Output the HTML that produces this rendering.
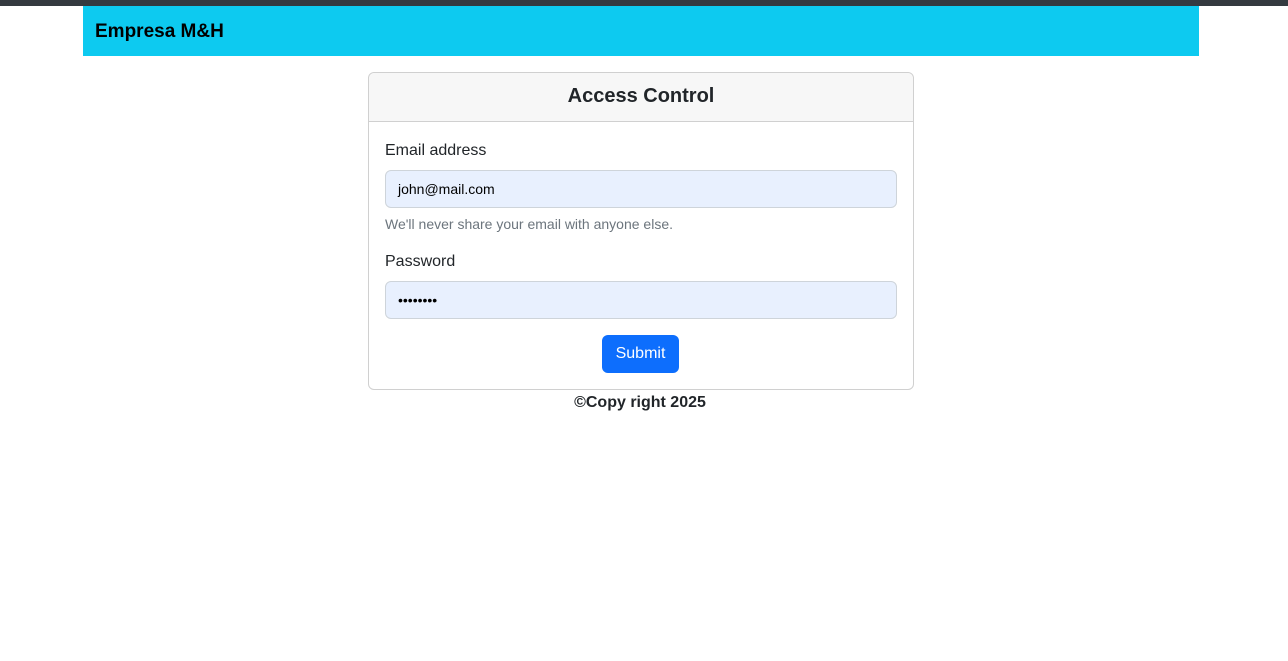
<!DOCTYPE html>
<html><head><style>
body{margin:0;font-family:"Liberation Sans",sans-serif;background:#fff;color:#212529;}
.top{height:6px;background:#343a40;}
.nav{position:absolute;left:83px;top:6px;width:1116px;height:50px;background:#0dcaf0;}
.nav span{position:absolute;left:12px;top:15px;font-size:19px;font-weight:bold;color:#000;}
.card{position:absolute;left:368px;top:72px;width:544px;height:316px;border:1px solid #d0d0d0;border-radius:6px;}
.hd{height:48px;background:#f7f7f7;border-bottom:1px solid #d0d0d0;border-radius:6px 6px 0 0;text-align:center;font-size:20px;line-height:46px;font-weight:600;}
.lbl{position:absolute;left:16px;font-size:16px;}
.inp{position:absolute;left:16px;width:512px;height:38px;background:#e8f0fe;border:1px solid #ced4da;border-radius:6px;font-size:14px;color:#000;line-height:36px;box-sizing:border-box;padding-left:12px;}
.help{position:absolute;left:16px;top:143px;font-size:14px;color:#6c757d;}
.btn{position:absolute;left:233px;top:262px;width:77px;height:38px;background:#0d6efd;color:#fff;border-radius:6px;font-size:16px;text-align:center;line-height:38px;}
.foot{position:absolute;left:0;width:1280px;top:394px;text-align:center;font-weight:bold;font-size:16px;}
</style></head><body>
<div class="top"></div>
<div class="nav"><span>Empresa M&amp;H</span></div>
<div class="card">
<div class="hd">Access Control</div>
<div class="lbl" style="top:69px">Email address</div>
<div class="inp" style="top:97px">john@mail.com</div>
<div class="help">We'll never share your email with anyone else.</div>
<div class="lbl" style="top:180px">Password</div>
<div class="inp" style="top:208px">••••••••</div>
<div class="btn">Submit</div>
</div>
<div class="foot">©Copy right 2025</div>
</body></html>
